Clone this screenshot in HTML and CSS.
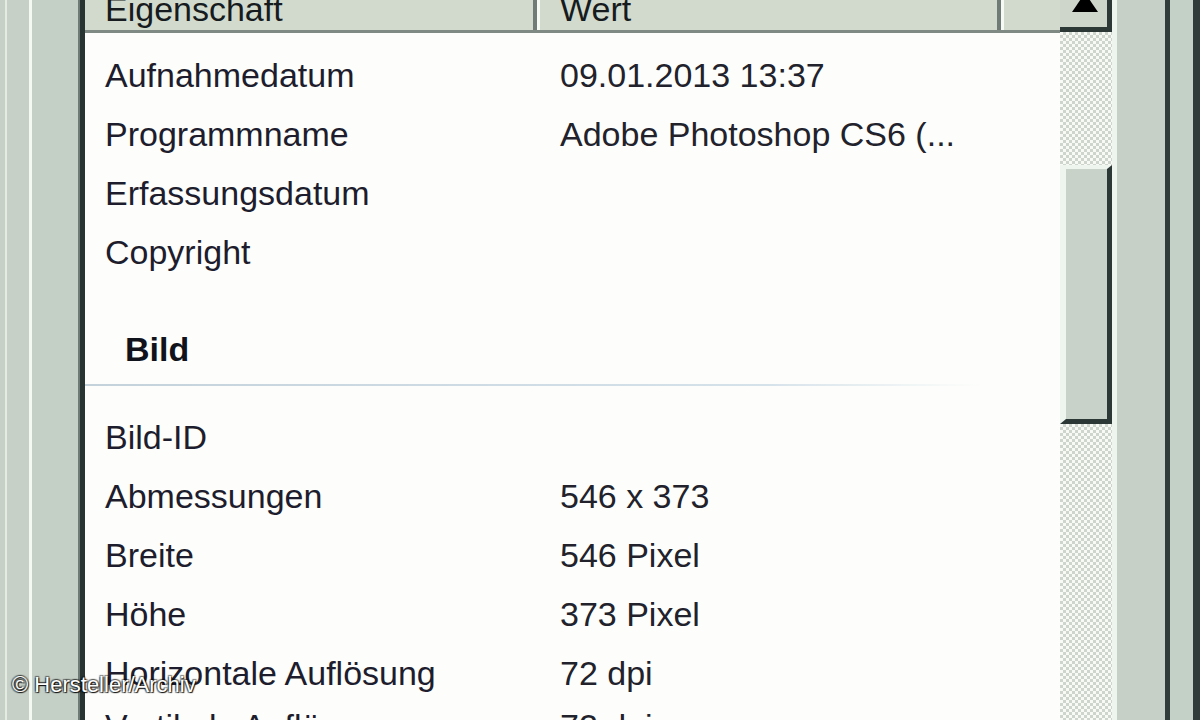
FILE: index.html
```html
<!DOCTYPE html>
<html lang="de">
<head>
    <meta charset="UTF-8">
    <meta name="viewport" content="width=device-width, initial-scale=1.0">
    <title>Eigenschaften - Details</title>
    <link rel="stylesheet" href="styles.css">
</head>
<body>
    <div class="window">
        <div class="frame-left"></div>

        <div class="list">
            <div class="list-head">
                <div class="col col-name">Eigenschaft</div>
                <div class="col col-value">Wert</div>
                <div class="col col-rest"></div>
            </div>

            <div class="row"><span class="name">Aufnahmedatum</span><span class="value">09.01.2013 13:37</span></div>
            <div class="row"><span class="name">Programmname</span><span class="value">Adobe Photoshop CS6 (...</span></div>
            <div class="row"><span class="name">Erfassungsdatum</span><span class="value"></span></div>
            <div class="row"><span class="name">Copyright</span><span class="value"></span></div>

            <div class="group">Bild</div>

            <div class="row"><span class="name">Bild-ID</span><span class="value"></span></div>
            <div class="row"><span class="name">Abmessungen</span><span class="value">546 x 373</span></div>
            <div class="row"><span class="name">Breite</span><span class="value">546 Pixel</span></div>
            <div class="row"><span class="name">Höhe</span><span class="value">373 Pixel</span></div>
            <div class="row"><span class="name">Horizontale Auflösung</span><span class="value">72 dpi</span></div>
            <div class="row row-last"><span class="name">Vertikale Auflösung</span><span class="value">72 dpi</span></div>
        </div>

        <div class="scrollbar">
            <div class="btn-up">
                <svg width="28" height="14" viewBox="0 0 28 14"><polygon points="14,-6 27,13 1,13" fill="#000"/></svg>
            </div>
            <div class="track track-top"></div>
            <div class="thumb"></div>
            <div class="track track-bottom"></div>
        </div>

        <div class="frame-right"></div>
    </div>

    <div class="credit">© Hersteller/Archiv</div>
</body>
</html>
```

FILE: styles.css
```css
html, body {
    margin: 0;
    padding: 0;
}

body {
    width: 1200px;
    height: 720px;
    overflow: hidden;
    position: relative;
    background-color: rgb(200, 210, 201);
    font-family: "Liberation Sans", Arial, sans-serif;
}

.window {
    display: flex;
    height: 720px;
}

.frame-left {
    width: 85px;
    flex: none;
    background: linear-gradient(to right,
        rgb(198, 208, 199) 0 5px,
        rgb(228, 236, 226) 5px 7px,
        rgb(198, 208, 199) 7px 29px,
        rgb(244, 249, 242) 29px 32px,
        rgb(196, 207, 198) 32px 78px,
        rgb(110, 122, 118) 78px 80px,
        rgb(40, 52, 50) 80px 85px);
}

.list {
    width: 975px;
    flex: none;
    background-color: #fdfefb;
    color: #1d1d2e;
    font-size: 34px;
}

.list-head {
    display: flex;
    height: 30px;
    border-bottom: 3px solid rgb(128, 138, 132);
    background-color: rgb(210, 218, 206);
    line-height: 18px;
    color: #161b20;
}

.col {
    height: 30px;
    overflow: hidden;
}

.col-name {
    width: 428px;
    padding-left: 20px;
    border-right: 4px solid rgb(112, 122, 118);
}

.col-value {
    width: 437px;
    padding-left: 20px;
    border-left: 3px solid #f6faf4;
    border-right: 4px solid rgb(112, 122, 118);
}

.col-rest {
    flex: 1;
    border-left: 3px solid #f6faf4;
}

.list-head + .row {
    margin-top: 13px;
}

.row {
    display: flex;
    height: 59px;
    line-height: 59px;
    white-space: nowrap;
}

.row-last {
    margin-top: -6px;
}

.row .name {
    width: 455px;
    padding-left: 20px;
}

.row .value {
    flex: 1;
    color: #22222c;
}

.group {
    padding: 38px 0 7px 40px;
    line-height: 59px;
    font-weight: bold;
    color: #10121c;
    margin-bottom: 22px;
    background: linear-gradient(to right, rgb(196, 210, 220), rgb(214, 226, 234) 70%, rgba(253, 254, 251, 0) 92%) left bottom / 100% 2px no-repeat;
}

.scrollbar {
    width: 52px;
    flex: none;
    display: flex;
    flex-direction: column;
}

.btn-up {
    height: 27px;
    flex: none;
    background-color: rgb(206, 214, 204);
    border-right: 5px solid rgb(44, 56, 54);
    border-bottom: 5px solid rgb(44, 56, 54);
    display: flex;
    justify-content: center;
    align-items: flex-end;
}

.btn-up svg {
    display: block;
    margin-bottom: 14px;
    margin-left: 2px;
}

.track {
    background: repeating-conic-gradient(rgb(206, 213, 205) 0 25%, #f7faf5 0 50%) 0 0 / 6px 6px;
}

.track-top {
    height: 133px;
    flex: none;
}

.thumb {
    height: 250px;
    flex: none;
    background-color: rgb(200, 210, 201);
    border-top: 4px solid #eef4ee;
    border-left: 6px solid #eef4ee;
    border-right: 5px solid rgb(44, 56, 54);
    border-bottom: 5px solid rgb(44, 56, 54);
}

.track-bottom {
    flex: 1;
}

.frame-right {
    flex: 1;
    background: linear-gradient(to right,
        #eef5ee 0 5px,
        rgb(198, 208, 199) 5px 53px,
        rgb(48, 60, 58) 53px 58px,
        rgb(196, 209, 199) 58px 81px,
        rgb(48, 60, 58) 81px 88px);
}

.credit {
    position: absolute;
    left: 12px;
    top: 672px;
    font-size: 22px;
    color: #ffffff;
    text-shadow: 1px 1px 1px rgba(0, 0, 0, 0.9), -1px -1px 1px rgba(0, 0, 0, 0.5), 1px -1px 1px rgba(0, 0, 0, 0.5), -1px 1px 1px rgba(0, 0, 0, 0.5);
}
```
